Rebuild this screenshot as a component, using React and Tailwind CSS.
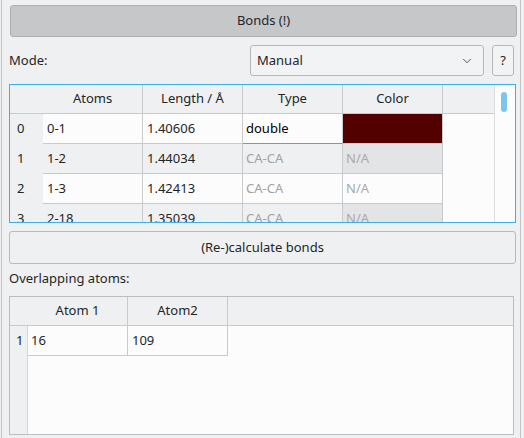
import { ChevronDown } from 'lucide-react';

const bonds = [
  { id: 0, atoms: '0-1', length: '1.40606', type: 'double', color: '#520000' },
  { id: 1, atoms: '1-2', length: '1.44034', type: 'CA-CA', color: null },
  { id: 2, atoms: '1-3', length: '1.42413', type: 'CA-CA', color: null },
  { id: 3, atoms: '2-18', length: '1.35039', type: 'CA-CA', color: null },
];

function BondRow({ row }) {
  const alt = row.id % 2 === 1;
  const rowBg = alt ? 'bg-[#eff0f1]' : 'bg-[#fcfcfc]';
  const editing = row.type === 'double';

  return (
    <div className="flex h-[30px] shrink-0">
      <div className="w-[33px] shrink-0 bg-[#eff0f1] pl-[7px] flex items-center">{row.id}</div>
      <div className={`w-[100px] shrink-0 ${rowBg} border-b border-r border-[#c9cacb] pl-[4px] flex items-center`}>
        {row.atoms}
      </div>
      <div className={`w-[100px] shrink-0 ${rowBg} border-b border-r border-[#c9cacb] pl-[4px] flex items-center`}>
        {row.length}
      </div>
      {editing ? (
        <div className="w-[100px] shrink-0 bg-[#fcfcfc] border-b border-r border-b-[#3daee9] border-r-[#c9cacb] pl-[3px] flex items-center text-black">
          {row.type}
        </div>
      ) : (
        <div className={`w-[100px] shrink-0 ${rowBg} border-b border-r border-[#c9cacb] pl-[3px] flex items-center text-[#a0a2a4]`}>
          {row.type}
        </div>
      )}
      {row.color ? (
        <div className="w-[100px] shrink-0 bg-[#520000] border-b border-r border-[#c9cacb]" />
      ) : (
        <div className={`w-[100px] shrink-0 ${alt ? 'bg-[#e3e4e5]' : 'bg-[#fcfcfc]'} border-b border-r border-[#c9cacb] pl-[3px] flex items-center text-[#a8aaac]`}>
          N/A
        </div>
      )}
      <div className="flex-1 bg-[#fcfcfc]" />
    </div>
  );
}

export default function App() {
  return (
    <div
      className="w-[524px] h-[438px] bg-[#eff0f1] overflow-hidden text-[13px] text-[#232629]"
      style={{ fontFamily: '"Noto Sans", "DejaVu Sans", sans-serif' }}
    >
      <div className="ml-[1px] w-[520px] h-full border-x border-[#c2c3c4] flex flex-col pl-[7px]">
        {/* BONDS HEADER BUTTON */}
        <button className="mt-[5px] ml-[1px] w-[507px] h-[32px] shrink-0 bg-[#c6c7c8] border border-[#aeafb0] rounded-[3px] flex items-center justify-center">
          Bonds (!)
        </button>

        {/* MODE ROW */}
        <div className="mt-[8px] w-[506px] h-[31px] shrink-0 flex items-center">
          <span>Mode:</span>
          <div className="ml-auto w-[234px] h-[31px] bg-[#f2f3f4] border border-[#b6b7b8] rounded-[3px] flex items-center pl-[6px] pr-[9px]">
            <span>Manual</span>
            <ChevronDown size={14} strokeWidth={1.3} className="ml-auto text-[#232629]" />
          </div>
          <button className="ml-[8px] mr-[1px] w-[22px] h-[31px] bg-[#f2f3f4] border border-[#b6b7b8] rounded-[3px] flex items-center justify-center">
            ?
          </button>
        </div>

        {/* BONDS TABLE */}
        <div className="mt-[8px] w-[507px] h-[139px] shrink-0 border border-[#3daee9] flex overflow-hidden">
          <div className="flex-1 flex flex-col bg-[#fcfcfc] overflow-hidden">
            <div className="flex h-[29px] shrink-0 bg-[#eff0f1] border-b border-[#c9cacb]">
              <div className="w-[33px] shrink-0" />
              {['Atoms', 'Length / Å', 'Type', 'Color'].map((h) => (
                <div key={h} className="w-[100px] shrink-0 border-r border-[#c9cacb] flex items-center justify-center">
                  {h}
                </div>
              ))}
              <div className="flex-1" />
            </div>
            {bonds.map((row) => (
              <BondRow key={row.id} row={row} />
            ))}
          </div>
          <div className="w-[21px] shrink-0 bg-[#fcfcfc] border-l border-[#dcdddf] pt-[7px] pl-[6px]">
            <div className="w-[6px] h-[20px] rounded-full bg-[#7ac6ef]" />
          </div>
        </div>

        {/* RECALCULATE BUTTON */}
        <button className="mt-[8px] w-[507px] h-[33px] shrink-0 bg-[#eff0f1] border border-[#b9babb] rounded-[3px] flex items-center justify-center">
          (Re-)calculate bonds
        </button>

        <div className="mt-[6px] h-[18px] shrink-0 flex items-center">Overlapping atoms:</div>

        {/* OVERLAPPING TABLE */}
        <div className="mt-[8px] w-[505px] h-[139px] shrink-0 border border-[#bcbdbe] flex flex-col bg-[#fcfcfc] overflow-hidden">
          <div className="flex h-[29px] shrink-0 bg-[#eff0f1] border-b border-[#c9cacb]">
            <div className="w-[18px] shrink-0" />
            {['Atom 1', 'Atom2'].map((h) => (
              <div key={h} className="w-[100px] shrink-0 border-r border-[#c9cacb] flex items-center justify-center">
                {h}
              </div>
            ))}
            <div className="flex-1" />
          </div>
          <div className="flex flex-1">
            <div className="w-[18px] shrink-0 bg-[#eff0f1] border-r border-[#d6d7d8]">
              <div className="h-[30px] flex items-center pl-[6px]">1</div>
            </div>
            <div className="flex h-[30px]">
              <div className="w-[100px] border-b border-r border-[#c9cacb] pl-[3px] flex items-center">16</div>
              <div className="w-[100px] border-b border-r border-[#c9cacb] pl-[4px] flex items-center">109</div>
            </div>
          </div>
        </div>
      </div>
    </div>
  );
}
